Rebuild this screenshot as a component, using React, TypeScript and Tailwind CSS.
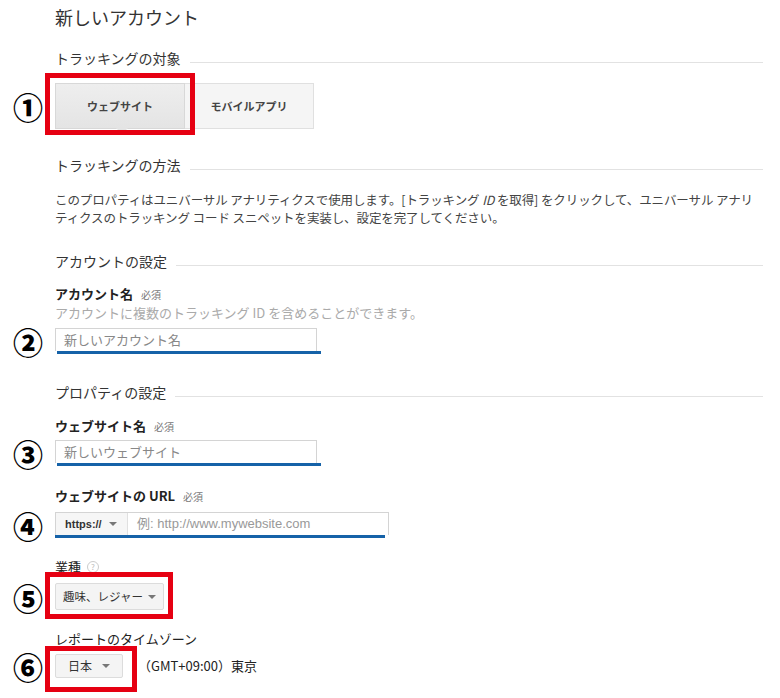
import React from 'react'

const font = { fontFamily: '"Noto Sans CJK JP", "Noto Sans", sans-serif' }

function Num({ n }: { n: string }) {
  return (
    <div className="-ml-[2px] mr-[2px] flex h-[20px] w-[40px] shrink-0 items-center text-[30px] leading-none font-black text-black">{n}</div>
  )
}

function SectionHeading({ title, className }: { title: string; className: string }) {
  return (
    <div className={`flex items-end pl-[40px] ${className}`}>
      <span className="text-[14px] leading-[20px] text-[#333]">{title}</span>
      <div className="ml-[9px] mb-[5px] h-px flex-1 bg-[#e2e2e2]" />
    </div>
  )
}

function FieldLabel({ label, required, className }: { label: string; required?: boolean; className: string }) {
  return (
    <div className={`h-[18px] pl-[40px] text-[13px] leading-[18px] font-bold text-[#222] ${className}`}>
      {label}
      {required && <span className="ml-[8px] text-[10px] font-normal text-[#777]">必須</span>}
    </div>
  )
}

function TextInput({ placeholder }: { placeholder: string }) {
  return (
    <div className="w-[262px]">
      <div className="h-[23px] border border-b-0 border-[#d4d4d4] bg-white pl-[8px] text-[13px] leading-[22px] text-[#888]">
        {placeholder}
      </div>
      <div className="ml-[2px] h-[3px] w-[264px] bg-[#1562a8]" />
    </div>
  )
}

function Caret() {
  return <span className="inline-block h-0 w-0 shrink-0 border-x-[4px] border-t-[4px] border-x-transparent border-t-[#777]" />
}

function Select({ label, width, annotate }: { label: string; width: string; annotate: string }) {
  return (
    <div className="relative">
      <div className={`flex items-center justify-between whitespace-nowrap ${width} border border-[#dcdcdc] bg-[#f4f4f4] rounded-[2px] text-[#333]`}>
        <span>{label}</span>
        <Caret />
      </div>
      <div className={`pointer-events-none absolute border-[5px] border-[#e60012] ${annotate}`} />
    </div>
  )
}

export default function App() {
  return (
    <div className="w-[780px] h-[698px] overflow-hidden bg-white pl-[15px] pr-[17px] pt-[5px]" style={font}>
      <div className="pl-[40px] text-[18px] leading-[24px] text-[#333]">新しいアカウント</div>

      <SectionHeading title="トラッキングの対象" className="mt-[19px]" />

      <div className="mt-[15px] flex items-center">
        <Num n="①" />
        <div className="relative flex">
          <div className="relative flex h-[46px] w-[130px] items-center justify-center border border-[#d8d8d8] bg-gradient-to-b from-[#eeeeee] to-[#e4e4e4] text-[11px] font-bold text-[#444]">
            ウェブサイト
            <span className="absolute -bottom-[6px] left-[60px] h-0 w-0 border-x-[6px] border-t-[6px] border-x-transparent border-t-[#e4e4e4]" />
          </div>
          <div className="flex h-[46px] w-[129px] items-center justify-center border border-l-0 border-[#e0e0e0] bg-[#f5f5f5] text-[11px] font-bold text-[#444]">
            モバイルアプリ
          </div>
          <div className="pointer-events-none absolute -left-[10px] -top-[10px] h-[62px] w-[150px] border-[5px] border-[#e60012]" />
        </div>
      </div>

      <SectionHeading title="トラッキングの方法" className="mt-[26px]" />

      <p className="mt-[16px] whitespace-nowrap pl-[40px] text-[12.5px] leading-[18px] tracking-[-0.1px] text-[#444]">
        このプロパティはユニバーサル アナリティクスで使用します。[トラッキング <i>ID</i> を取得] をクリックして、ユニバーサル アナリ
        <br />
        ティクスのトラッキング コード スニペットを実装し、設定を完了してください。
      </p>

      <SectionHeading title="アカウントの設定" className="mt-[24px]" />

      <FieldLabel label="アカウント名" required className="mt-[14px]" />
      <div className="mt-[1px] h-[18px] pl-[40px] text-[13px] leading-[18px] text-[#aaa]">
        アカウントに複数のトラッキング ID を含めることができます。
      </div>
      <div className="mt-[6px] flex items-center">
        <Num n="②" />
        <TextInput placeholder="新しいアカウント名" />
      </div>

      <SectionHeading title="プロパティの設定" className="mt-[28px]" />

      <FieldLabel label="ウェブサイト名" required className="mt-[15px]" />
      <div className="mt-[5px] flex items-center">
        <Num n="③" />
        <TextInput placeholder="新しいウェブサイト" />
      </div>

      <FieldLabel label="ウェブサイトの URL" required className="mt-[21px]" />
      <div className="mt-[7px] flex items-center">
        <Num n="④" />
        <div className="w-[334px]">
          <div className="flex h-[23px] border border-b-0 border-[#d4d4d4] bg-white">
            <div className="flex w-[72px] items-center justify-between border-r border-[#e0e0e0] bg-[#f6f6f6] pl-[9px] pr-[10px] text-[11px] font-bold text-[#333]">
              <span style={{ fontFamily: '"Liberation Sans", Arial, sans-serif' }}>https://</span>
              <Caret />
            </div>
            <div className="pl-[9px] text-[13px] leading-[22px] text-[#999]" style={{ fontFamily: '"Liberation Sans", "Noto Sans CJK JP", sans-serif' }}>
              例: http://www.mywebsite.com
            </div>
          </div>
          <div className="h-[3px] w-[330px] bg-[#1562a8]" />
        </div>
      </div>

      <div className="mt-[20px] flex h-[18px] items-center pl-[40px] text-[13px] leading-[18px] text-[#222]">
        業種
        <span className="ml-[6px] flex h-[12px] w-[12px] items-center justify-center rounded-full border border-[#ccc] text-[8px] leading-none text-[#bbb]">?</span>
      </div>
      <div className="mt-[7px] flex items-center">
        <Num n="⑤" />
        <Select label="趣味、レジャー" width="w-[109px] h-[27px] pl-[7px] pr-[7px] text-[11.5px]" annotate="-left-[10px] -top-[11px] -right-[9px] -bottom-[9px]" />
      </div>

      <div className="mt-[20px] h-[18px] pl-[40px] text-[13px] leading-[18px] text-[#222]">レポートのタイムゾーン</div>
      <div className="mt-[6px] flex items-center">
        <Num n="⑥" />
        <Select label="日本" width="w-[68px] h-[24px] pl-[12px] pr-[12px] text-[12px]" annotate="-left-[10px] -top-[8px] -right-[14px] -bottom-[14px]" />
        <span className="ml-[15px] text-[13px] leading-[18px] text-[#222]">（GMT+09:00）東京</span>
      </div>
    </div>
  )
}
